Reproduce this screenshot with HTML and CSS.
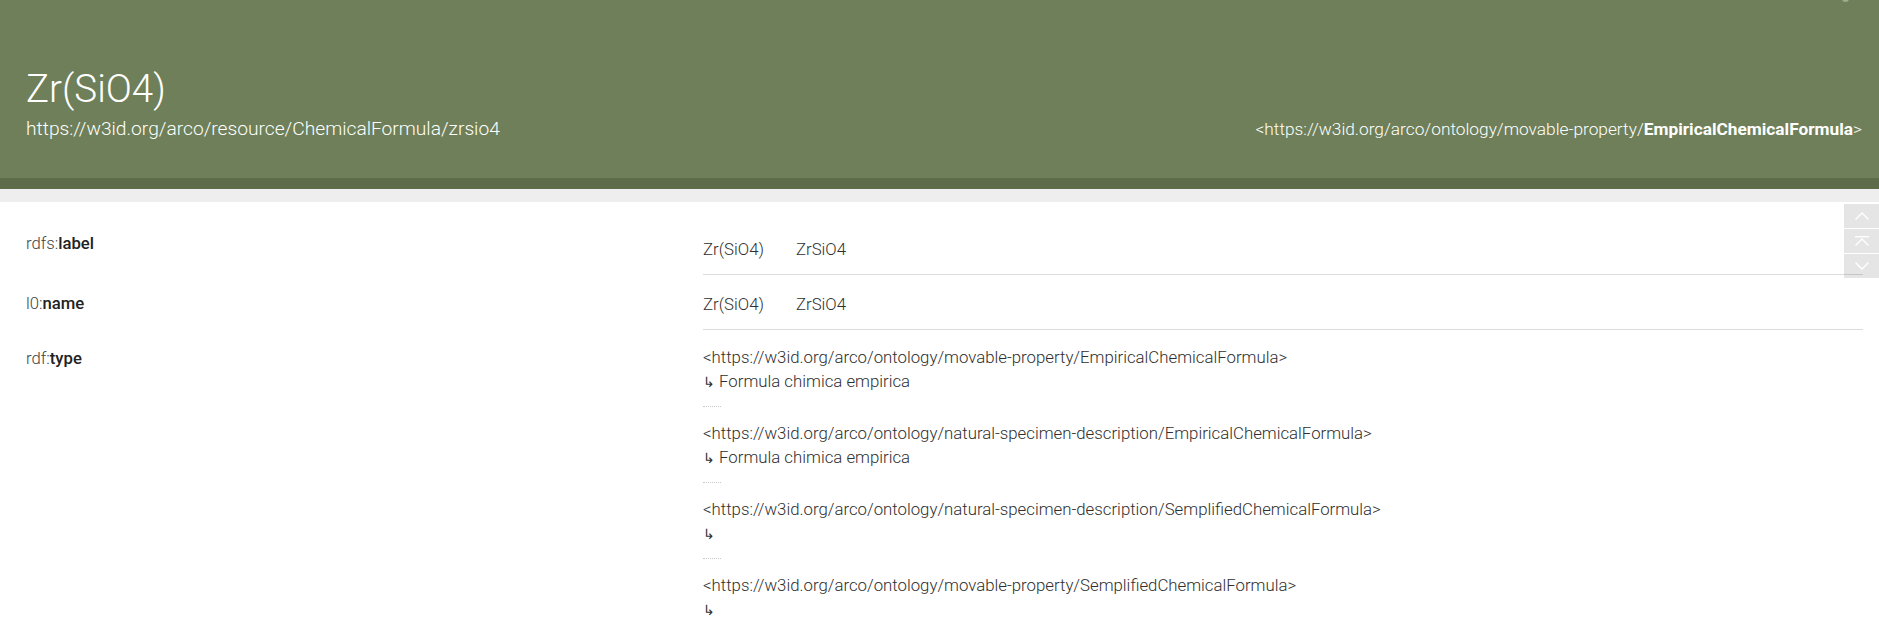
FILE: index.html
```html
<!DOCTYPE html>
<html lang="it">
<head>
<meta charset="utf-8">
<title>Zr(SiO4)</title>
<link rel="stylesheet" href="styles.css">
</head>
<body>
<header class="hero">
  <span class="hero-dot"></span>
  <div class="hero-titles">
    <h1 class="hero-title">Zr(SiO4)</h1>
    <div class="hero-uri">https://w3id.org/arco/resource/ChemicalFormula/zrsio4</div>
  </div>
  <div class="hero-type">&lt;https://w3id.org/arco/ontology/movable-property/<b>EmpiricalChemicalFormula</b>&gt;</div>
</header>
<div class="band-dark"></div>
<div class="band-grey"></div>

<main class="props">
  <div class="row">
    <div class="prop prop-first"><span class="ns">rdfs:</span><span class="local">label</span></div>
    <div class="vals vals-inline">
      <span class="lit">Zr(SiO4)</span>
      <span class="lit">ZrSiO4</span>
    </div>
  </div>
  <div class="row">
    <div class="prop"><span class="ns">l0:</span><span class="local">name</span></div>
    <div class="vals vals-inline">
      <span class="lit">Zr(SiO4)</span>
      <span class="lit">ZrSiO4</span>
    </div>
  </div>
  <div class="row">
    <div class="prop"><span class="ns">rdf:</span><span class="local">type</span></div>
    <div class="vals vals-stack">
      <div class="obj">
        <div class="obj-uri">&lt;https://w3id.org/arco/ontology/movable-property/EmpiricalChemicalFormula&gt;</div>
        <div class="obj-label"><span class="arrow">↳</span> Formula chimica empirica</div>
      </div>
      <div class="obj">
        <div class="obj-uri">&lt;https://w3id.org/arco/ontology/natural-specimen-description/EmpiricalChemicalFormula&gt;</div>
        <div class="obj-label"><span class="arrow">↳</span> Formula chimica empirica</div>
      </div>
      <div class="obj">
        <div class="obj-uri">&lt;https://w3id.org/arco/ontology/natural-specimen-description/SemplifiedChemicalFormula&gt;</div>
        <div class="obj-label"><span class="arrow">↳</span></div>
      </div>
      <div class="obj">
        <div class="obj-uri">&lt;https://w3id.org/arco/ontology/movable-property/SemplifiedChemicalFormula&gt;</div>
        <div class="obj-label"><span class="arrow">↳</span></div>
      </div>
    </div>
  </div>
</main>

<nav class="scroller">
  <span class="sbtn"><svg viewBox="0 0 14 8" width="14" height="8"><path d="M0.5 7.5 L7 1 L13.5 7.5" fill="none" stroke="#fff" stroke-width="1.4"/></svg></span>
  <span class="sbtn"><svg viewBox="0 0 14 10" width="14" height="10"><path d="M0 0.7 H14" stroke="#fff" stroke-width="1.4"/><path d="M0.5 9.5 L7 3 L13.5 9.5" fill="none" stroke="#fff" stroke-width="1.4"/></svg></span>
  <span class="sbtn"><svg viewBox="0 0 14 8" width="14" height="8"><path d="M0.5 0.5 L7 7 L13.5 0.5" fill="none" stroke="#fff" stroke-width="1.4"/></svg></span>
</nav>
</body>
</html>
```

FILE: styles.css
```css
html, body {
  margin: 0;
  padding: 0;
  background: #ffffff;
}
body {
  font-family: Roboto, "Liberation Sans", Arial, sans-serif;
  color: #333;
  position: relative;
}

.hero {
  position: relative;
  background: #6e7f59;
  color: #ffffff;
  height: 178px;
  box-sizing: border-box;
  padding: 0 17px 37px 26px;
  display: flex;
  align-items: flex-end;
  justify-content: space-between;
}
.hero-dot {
  position: absolute;
  top: -5px;
  right: 30px;
  width: 7px;
  height: 7px;
  border-radius: 50%;
  background: rgba(255,255,255,0.35);
}
.hero-titles {
  display: flex;
  flex-direction: column;
  gap: 7px;
}
.hero-title {
  margin: 0;
  font-size: 38.5px;
  line-height: 42px;
  font-weight: 300;
}
.hero-uri {
  font-size: 19.2px;
  line-height: 24px;
  font-weight: 300;
}
.hero-type {
  font-size: 17.3px;
  line-height: 24px;
  font-weight: 300;
}
.hero-type b {
  font-weight: 700;
}

.band-dark {
  height: 11px;
  background: #5e6c4a;
}
.band-grey {
  height: 13px;
  background: #eeeeee;
}

.props {
  padding: 18px 16px 0 26px;
}
.row {
  display: flex;
}
.prop {
  width: 677px;
  flex: none;
  padding-top: 17px;
  font-size: 16.7px;
  line-height: 24px;
}
.prop-first {
  padding-top: 12px;
}
.ns {
  font-weight: 300;
  color: #444;
}
.local {
  font-weight: 500;
  color: #222;
}
.vals {
  flex: 1;
  border-bottom: 1px solid #dddddd;
  font-size: 16.8px;
  line-height: 24px;
  font-weight: 300;
  color: #2f2f2f;
}
.vals-inline {
  display: flex;
  gap: 32px;
  padding: 17px 0 13px;
}
.vals-stack {
  border-bottom: none;
  padding-top: 15px;
}
.arrow {
  font-family: "DejaVu Sans", sans-serif;
  font-weight: 200;
  font-size: 14px;
}
.obj + .obj::before {
  content: "";
  display: block;
  width: 18px;
  border-top: 1px dotted #c8c8c8;
  margin: 12px 0 14px;
}

.scroller {
  position: absolute;
  top: 204px;
  right: 0;
  width: 35px;
  display: flex;
  flex-direction: column;
  gap: 1px;
}
.sbtn {
  height: 24px;
  background: rgba(0,0,0,0.1);
  display: flex;
  align-items: center;
  justify-content: center;
}
```
